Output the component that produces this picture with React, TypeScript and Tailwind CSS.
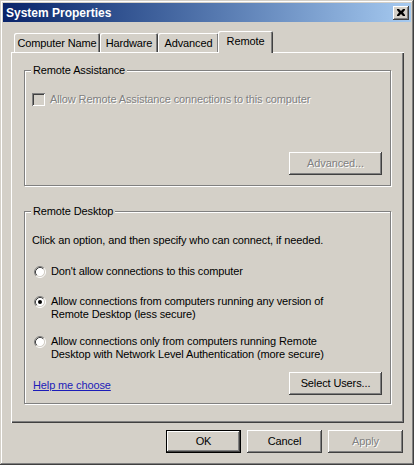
import React from "react";

const bevelBtn =
  "shadow-[inset_-1px_-1px_#404040,inset_1px_1px_#fff,inset_-2px_-2px_#808080,inset_2px_2px_#d4d0c8]";

function Button({
  children,
  w,
  disabled,
  isDefault,
}: {
  children: React.ReactNode;
  w: string;
  disabled?: boolean;
  isDefault?: boolean;
}) {
  if (isDefault) {
    return (
      <div className={`${w} h-[23px] border border-black bg-[#d4d0c8] flex`}>
        <div className="flex-1 flex items-center justify-center shadow-[inset_-1px_-1px_#404040,inset_1px_1px_#fff,inset_-2px_-2px_#808080]">
          {children}
        </div>
      </div>
    );
  }
  return (
    <div
      className={`${w} h-[23px] bg-[#d4d0c8] flex items-center justify-center ${bevelBtn} ${
        disabled ? "text-[#808080] [text-shadow:1px_1px_0_#fff]" : ""
      }`}
    >
      {children}
    </div>
  );
}

function Radio({ checked }: { checked?: boolean }) {
  return (
    <svg width="12" height="12" viewBox="0 0 12 12" className="shrink-0">
      <circle cx="6" cy="6" r="4.5" fill="#fff" />
      <path d="M2.11 9.89 A5.5 5.5 0 0 1 9.89 2.11" stroke="#808080" fill="none" />
      <path d="M9.89 2.11 A5.5 5.5 0 0 1 2.11 9.89" stroke="#fff" fill="none" />
      <path d="M2.82 9.18 A4.5 4.5 0 0 1 9.18 2.82" stroke="#404040" fill="none" />
      <path d="M9.18 2.82 A4.5 4.5 0 0 1 2.82 9.18" stroke="#d4d0c8" fill="none" />
      {checked && <circle cx="6" cy="6" r="2" fill="#000" />}
    </svg>
  );
}

function Tab({ label, w, selected }: { label: string; w: string; selected?: boolean }) {
  if (selected) {
    return (
      <div
        className={`${w} h-[22px] -ml-[1px] -mb-[1px] relative z-10 bg-[#d4d0c8] rounded-t-[2px] flex justify-center pt-[4px] shadow-[inset_1px_1px_#fff,inset_-1px_0_#404040,inset_-2px_0_#808080]`}
      >
        {label}
      </div>
    );
  }
  return (
    <div
      className={`${w} h-[19px] bg-[#d4d0c8] rounded-t-[2px] flex justify-center pt-[4px] shadow-[inset_1px_1px_#fff,inset_-1px_0_#404040,inset_-2px_0_#808080]`}
    >
      {label}
    </div>
  );
}

export default function App() {
  return (
    <div className="w-[414px] h-[465px] bg-[#d4d0c8] p-[3px] flex flex-col shadow-[inset_-1px_-1px_#404040,inset_1px_1px_#d4d0c8,inset_-2px_-2px_#808080,inset_2px_2px_#fff] font-['Liberation_Sans',Arial,sans-serif] text-[11px] leading-[13px] tracking-[-0.12px] text-black">
      {/* Title bar */}
      <div className="h-[19px] bg-linear-to-r from-[#0a246a] to-[#a6caf0] flex items-center justify-between pl-[3px] pr-[2px]">
        <span className="text-white font-bold text-[12px] tracking-normal pt-[1px]">System Properties</span>
        <div className={`w-[16px] h-[14px] bg-[#d4d0c8] flex items-center justify-center ${bevelBtn}`}>
          <svg width="8" height="7" viewBox="0 0 8 7">
            <path d="M0 0h2l2 2 2-2h2v1L6 3.5 8 6v1H6L4 5 2 7H0V6l2-2.5L0 1z" fill="#000" />
          </svg>
        </div>
      </div>

      {/* Body */}
      <div className="flex flex-col pl-[8px] pr-[7px] mt-[9px]">
        <div className="flex items-end h-[21px] pl-[3px]">
          <Tab label="Computer Name" w="w-[86px]" />
          <Tab label="Hardware" w="w-[58px]" />
          <Tab label="Advanced" w="w-[61px]" />
          <Tab label="Remote" w="w-[55px]" selected />
        </div>

        <div className="h-[371px] flex flex-col px-[13px] shadow-[inset_1px_1px_#fff,inset_-1px_-1px_#404040,inset_-2px_-2px_#808080]">
          {/* Remote Assistance */}
          <div className="mt-[18px] h-[116px] border border-[#808080] shadow-[inset_1px_1px_#fff,1px_1px_#fff] flex flex-col">
            <span className="-mt-[7px] ml-[6px] self-start px-[2px] bg-[#d4d0c8]">Remote Assistance</span>
            <div className="mt-[16px] ml-[7px] flex items-center gap-[5px]">
              <div className="w-[13px] h-[13px] bg-[#d4d0c8] shadow-[inset_1px_1px_#808080,inset_-1px_-1px_#fff,inset_2px_2px_#404040,inset_-2px_-2px_#d4d0c8]" />
              <span className="text-[#808080] [text-shadow:1px_1px_0_#fff]">
                Allow Remote Assistance connections to this computer
              </span>
            </div>
            <div className="mt-[46px] mr-[8px] self-end">
              <Button w="w-[93px]" disabled>
                Advanced...
              </Button>
            </div>
          </div>

          {/* Remote Desktop */}
          <div className="mt-[25px] h-[193px] border border-[#808080] shadow-[inset_1px_1px_#fff,1px_1px_#fff] flex flex-col">
            <span className="-mt-[7px] ml-[6px] self-start px-[2px] bg-[#d4d0c8]">Remote Desktop</span>
            <div className="mt-[16px] ml-[7px]">
              Click an option, and then specify who can connect, if needed.
            </div>
            <div className="mt-[18px] ml-[9px] flex items-start gap-[5px]">
              <div className="pt-[1px]">
                <Radio />
              </div>
              <span>Don't allow connections to this computer</span>
            </div>
            <div className="mt-[17px] ml-[9px] flex items-start gap-[5px]">
              <div className="pt-[1px]">
                <Radio checked />
              </div>
              <span>
                Allow connections from computers running any version of
                <br />
                Remote Desktop (less secure)
              </span>
            </div>
            <div className="mt-[14px] ml-[9px] flex items-start gap-[5px]">
              <div className="pt-[1px]">
                <Radio />
              </div>
              <span>
                Allow connections only from computers running Remote
                <br />
                Desktop with Network Level Authentication (more secure)
              </span>
            </div>
            <div className="mt-[11px] ml-[8px] mr-[8px] flex items-center justify-between">
              <span className="text-[#1c1cb8] underline pt-[3px]">Help me choose</span>
              <Button w="w-[93px]">Select Users...</Button>
            </div>
          </div>
        </div>

        {/* Bottom buttons */}
        <div className="mt-[7px] flex justify-end gap-[6px] pr-[1px]">
          <Button w="w-[75px]" isDefault>
            OK
          </Button>
          <Button w="w-[75px]">Cancel</Button>
          <Button w="w-[75px]" disabled>
            Apply
          </Button>
        </div>
      </div>
    </div>
  );
}
